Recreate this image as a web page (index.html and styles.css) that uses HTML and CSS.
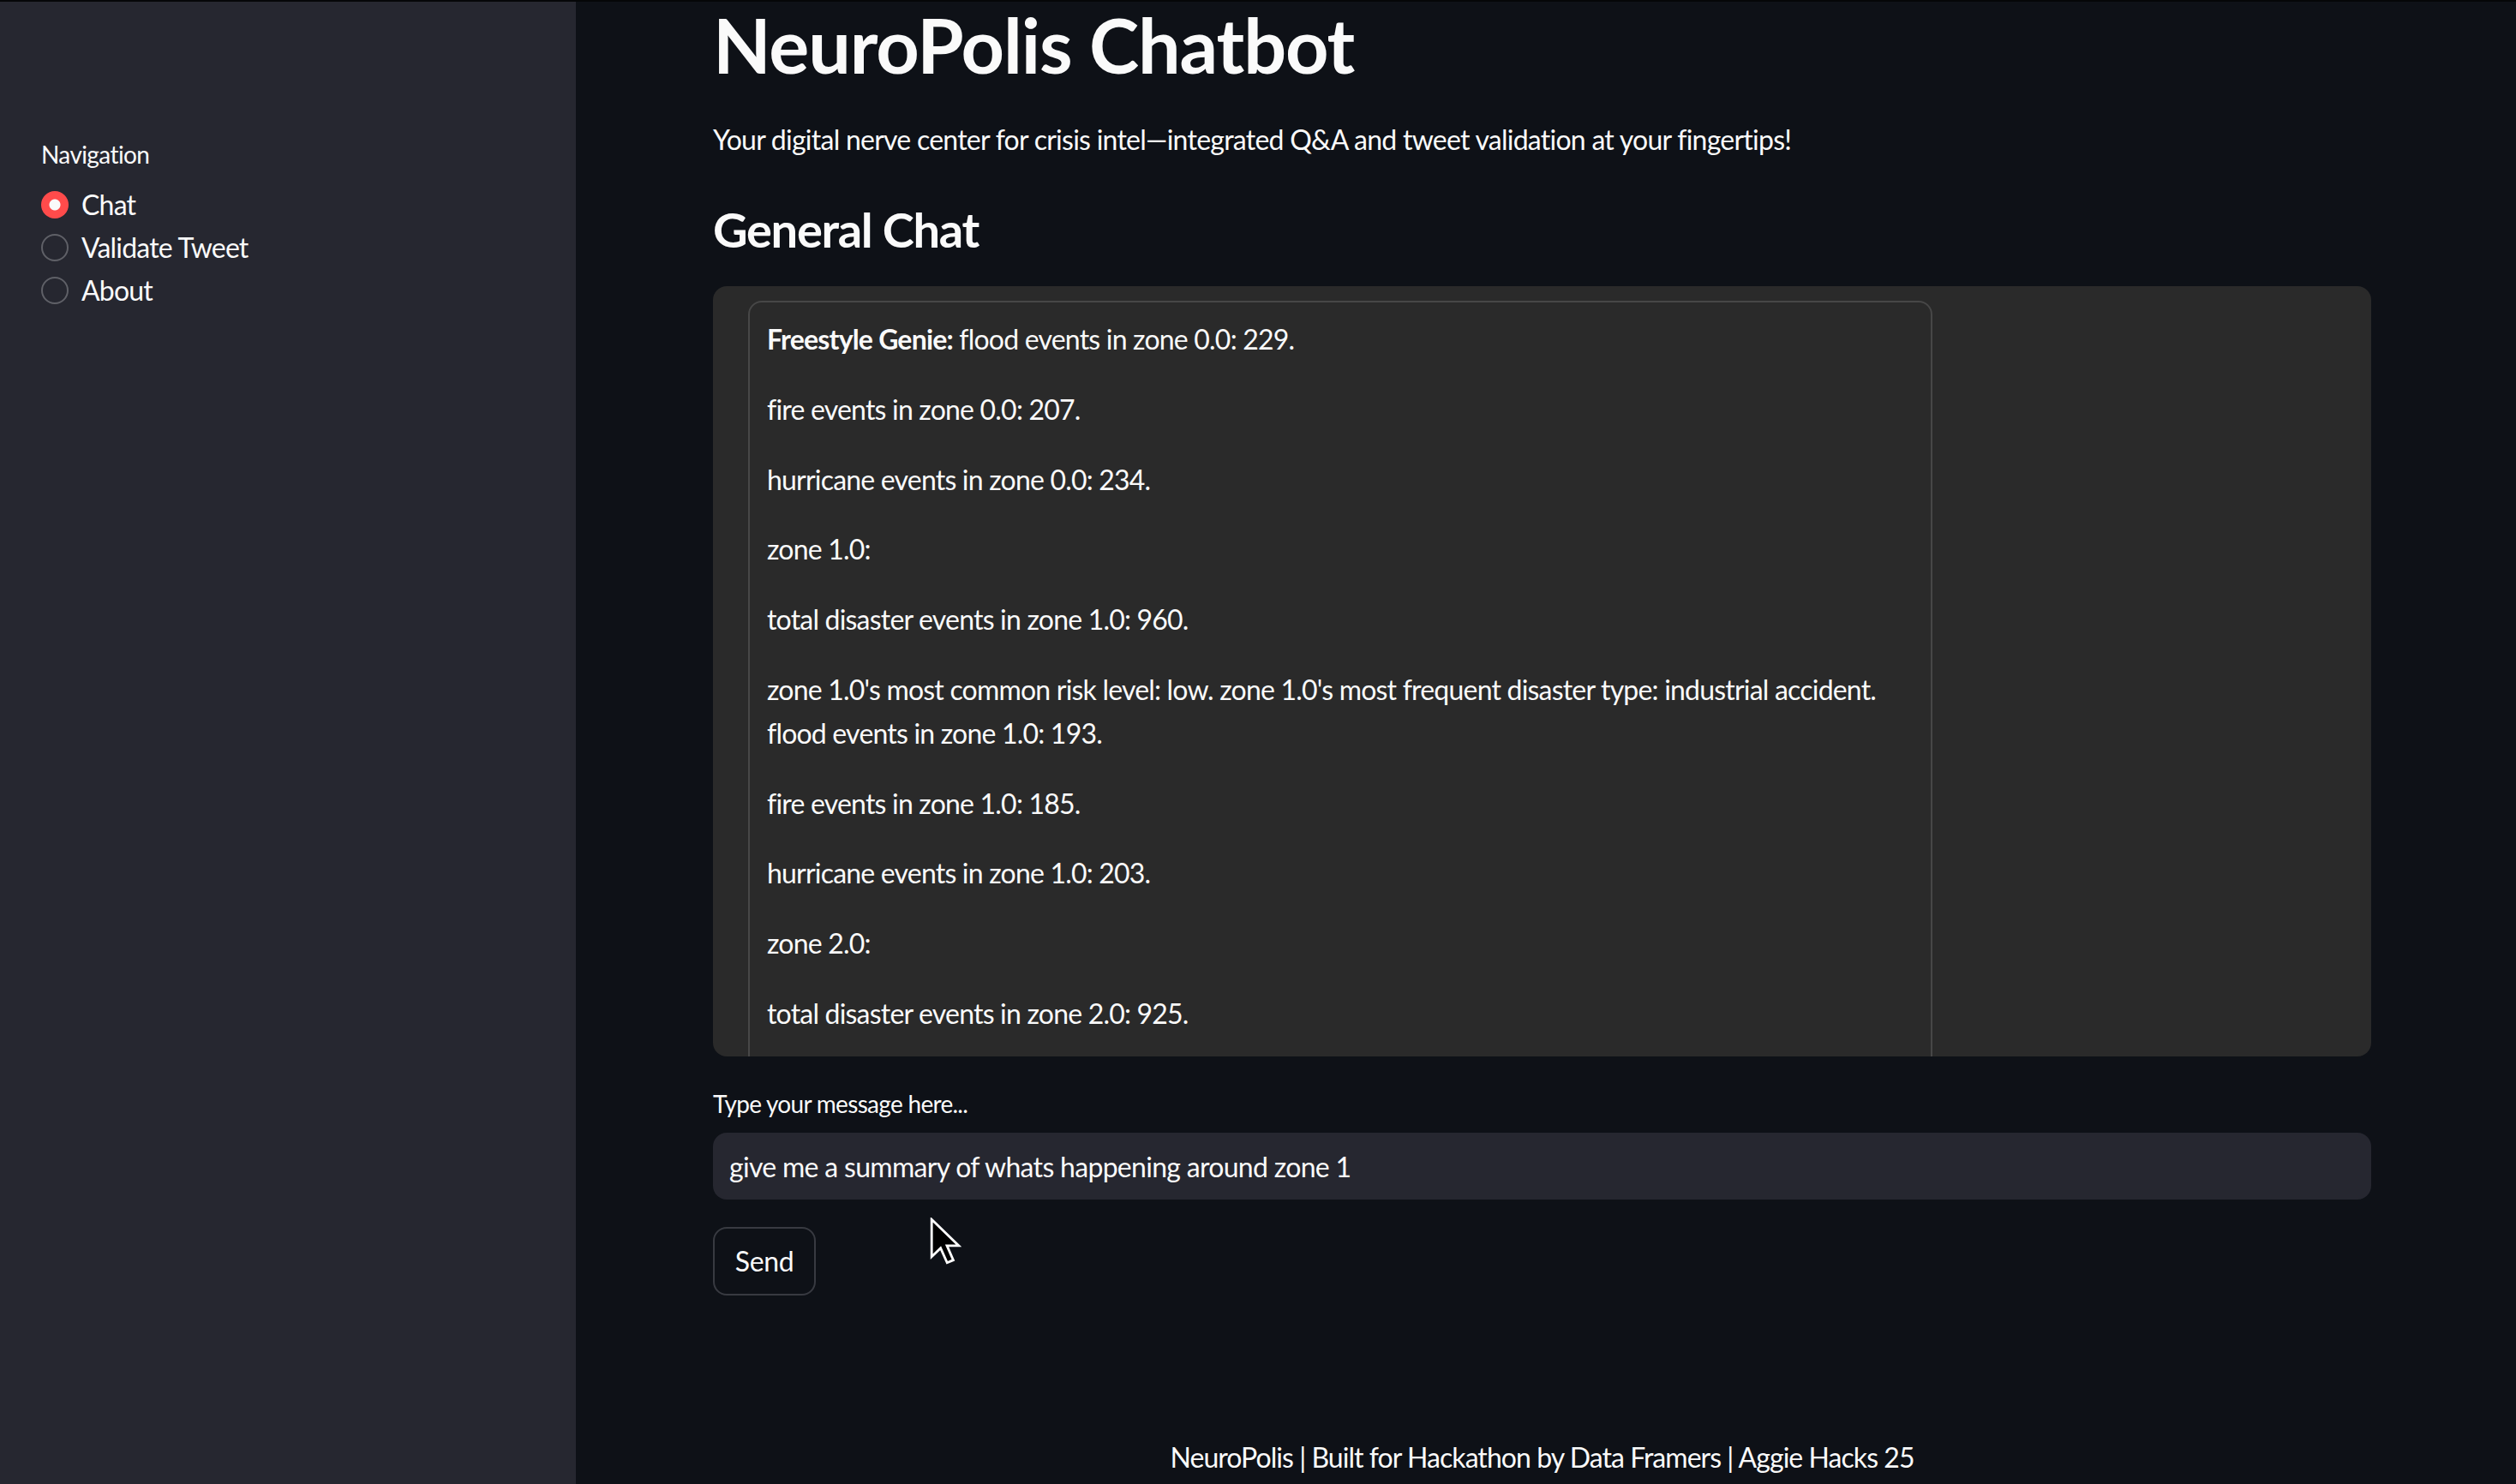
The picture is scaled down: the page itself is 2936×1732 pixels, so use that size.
FILE: index.html
```html
<!DOCTYPE html>
<html lang="en">
<head>
<meta charset="utf-8">
<title>NeuroPolis Chatbot</title>
<link rel="stylesheet" href="styles.css">
</head>
<body>
<div class="app">
  <aside class="sidebar">
    <div class="widget-label">Navigation</div>
    <div class="radio-group">
      <div class="radio-row"><span class="radio radio-on"></span><span class="radio-text">Chat</span></div>
      <div class="radio-row"><span class="radio"></span><span class="radio-text">Validate Tweet</span></div>
      <div class="radio-row"><span class="radio"></span><span class="radio-text">About</span></div>
    </div>
  </aside>
  <main class="main">
    <h1 class="title">NeuroPolis Chatbot</h1>
    <p class="subtitle">Your digital nerve center for crisis intel—integrated Q&amp;A and tweet validation at your fingertips!</p>
    <h3 class="section">General Chat</h3>
    <div class="chat-outer">
      <div class="chat-inner">
        <p><strong>Freestyle Genie:</strong> flood events in zone 0.0: 229.</p>
        <p>fire events in zone 0.0: 207.</p>
        <p>hurricane events in zone 0.0: 234.</p>
        <p>zone 1.0:</p>
        <p>total disaster events in zone 1.0: 960.</p>
        <p>zone 1.0's most common risk level: low. zone 1.0's most frequent disaster type: industrial accident.<br>flood events in zone 1.0: 193.</p>
        <p>fire events in zone 1.0: 185.</p>
        <p>hurricane events in zone 1.0: 203.</p>
        <p>zone 2.0:</p>
        <p>total disaster events in zone 2.0: 925.</p>
      </div>
    </div>
    <div class="input-block">
      <div class="widget-label input-label">Type your message here...</div>
      <div class="text-input">give me a summary of whats happening around zone 1</div>
    </div>
    <div class="button-row"><button class="send-btn">Send</button></div>
    <footer class="footer">NeuroPolis | Built for Hackathon by Data Framers | Aggie Hacks 25</footer>
  </main>
  <svg class="cursor" width="37" height="58" viewBox="0 0 17 26.6" xmlns="http://www.w3.org/2000/svg">
    <path d="M1 1 L1 21 L5.8 16.4 L9.3 24.2 L12.6 22.8 L9.2 15.1 L15.6 15.1 Z" fill="#000" stroke="#fff" stroke-width="1.3" stroke-linejoin="miter"/>
  </svg>
</div>
</body>
</html>
```

FILE: styles.css
```css
html, body {
  margin: 0;
  padding: 0;
  background: #0e1117;
}

body {
  font-family: "Lato", "Source Sans Pro", "Noto Sans", sans-serif;
  color: #fafafa;
  width: 2936px;
  height: 1732px;
  overflow: hidden;
}

.app {
  position: relative;
  display: flex;
  width: 2936px;
  height: 1732px;
}

.app::before {
  content: "";
  position: absolute;
  left: 0;
  top: 0;
  right: 0;
  height: 2px;
  background: #050608;
  z-index: 2;
}

.sidebar {
  width: 672px;
  flex: 0 0 672px;
  background: #262730;
  padding: 158px 0 0 48px;
  box-sizing: border-box;
}

.widget-label {
  font-size: 28px;
  line-height: 44.8px;
  min-height: 48px;
  margin-bottom: 8px;
  color: #fafafa;
  letter-spacing: -0.6px;
}

.input-label {
  letter-spacing: -0.7px;
}

.radio-group {
  display: flex;
  flex-direction: column;
}

.radio-row {
  display: flex;
  align-items: center;
  height: 50px;
  gap: 15px;
}

.radio {
  width: 32px;
  height: 32px;
  box-sizing: border-box;
  border-radius: 50%;
  border: 2px solid #5f6067;
  flex: 0 0 32px;
}

.radio-on {
  border: none;
  background: radial-gradient(circle, #fafafa 0 6px, #ff4b4b 7px);
}

.radio-text {
  font-size: 32px;
  line-height: 50px;
  letter-spacing: -0.8px;
}

.main {
  flex: 1;
  display: flex;
  flex-direction: column;
  padding: 0 169px 0 160px;
  box-sizing: border-box;
  min-width: 0;
}

.title {
  margin: 0;
  font-size: 88px;
  line-height: 1.2;
  font-weight: 700;
  letter-spacing: -1.1px;
}

.subtitle {
  margin: 31px 0 0;
  font-size: 32px;
  line-height: 51.2px;
  letter-spacing: -0.75px;
}

.section {
  margin: 46px 0 0;
  font-size: 56px;
  line-height: 1.2;
  font-weight: 700;
  letter-spacing: -1.3px;
}

.chat-outer {
  margin-top: 33px;
  height: 899px;
  background: #2a2a2a;
  border-radius: 16px;
  overflow: hidden;
  padding: 17px 0 0 41px;
  box-sizing: border-box;
  flex: 0 0 auto;
}

.chat-inner {
  width: 1382px;
  box-sizing: border-box;
  border: 2px solid #474747;
  border-radius: 16px 16px 0 0;
  padding: 18px 22px 0 20px;
  min-height: 1200px;
}

.chat-inner p {
  margin: 0 0 31px;
  font-size: 32px;
  line-height: 50.8px;
  letter-spacing: -0.8px;
}

.chat-inner strong {
  font-weight: 700;
}

.input-block {
  margin-top: 33px;
}

.text-input {
  height: 78px;
  background: #262730;
  border-radius: 16px;
  padding: 0 19px;
  font-size: 32px;
  line-height: 80px;
  letter-spacing: -0.7px;
  color: #fafafa;
}

.button-row {
  margin-top: 32px;
}

.send-btn {
  height: 80px;
  width: 120px;
  background: #0e1117;
  border: 2px solid #383a41;
  border-radius: 16px;
  color: #fafafa;
  font-family: inherit;
  font-size: 32px;
  letter-spacing: -0.4px;
  padding: 0;
}

.footer {
  margin-top: auto;
  padding-bottom: 6px;
  text-align: center;
  font-size: 32px;
  line-height: 51.2px;
  letter-spacing: -0.95px;
}

.cursor {
  position: absolute;
  left: 1085px;
  top: 1421px;
}
```
